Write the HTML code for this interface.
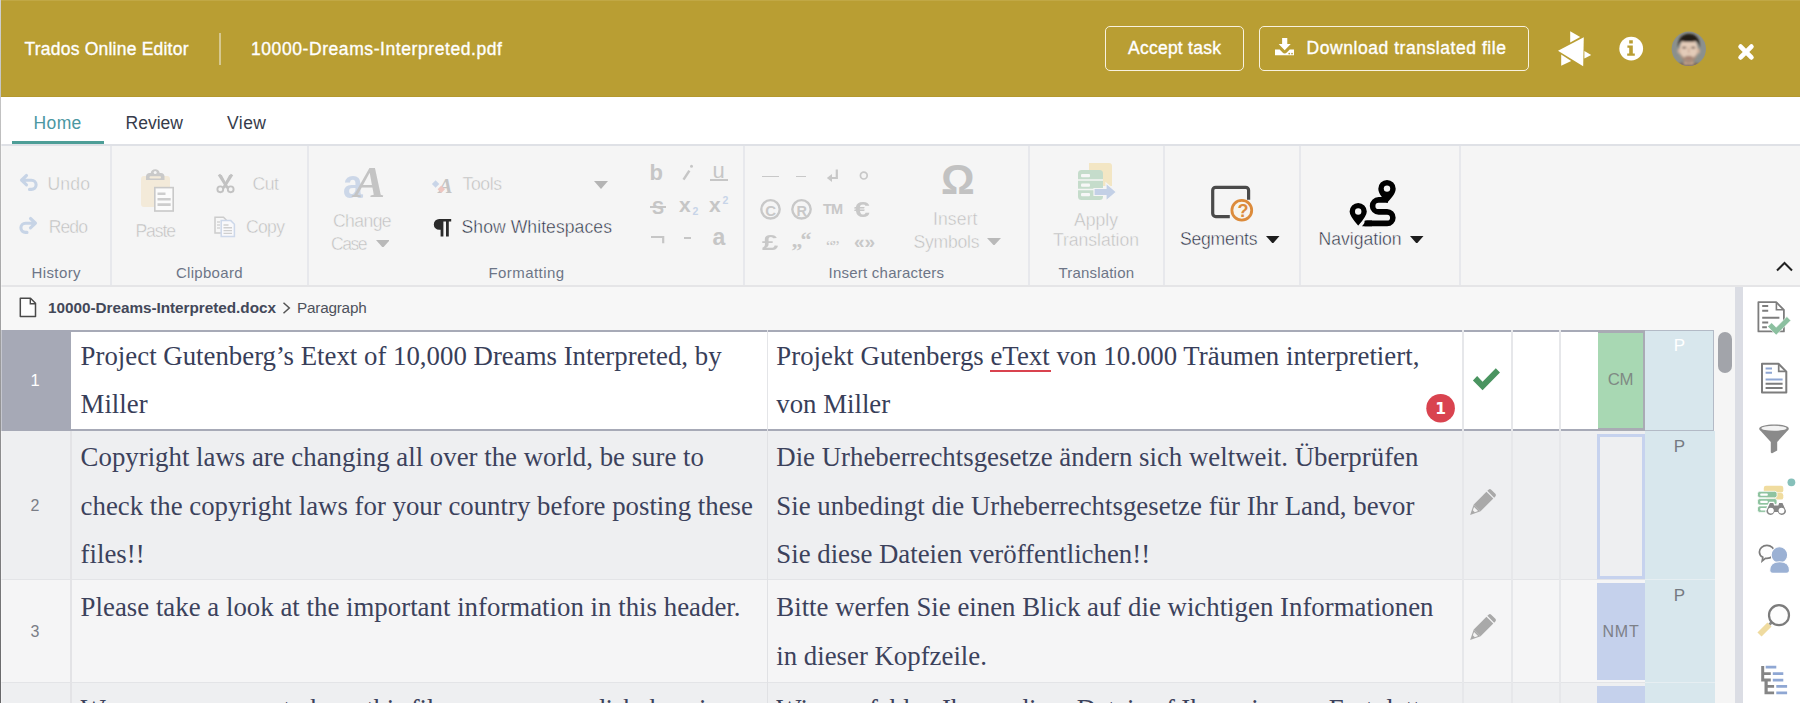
<!DOCTYPE html>
<html lang="en">
<head>
<meta charset="utf-8">
<title>Trados Online Editor</title>
<style>
*{box-sizing:border-box;margin:0;padding:0}
html,body{width:1800px;height:703px;overflow:hidden;background:#fff}
body{position:relative;font-family:"Liberation Sans",sans-serif;color:#3a3f4f}
.abs{position:absolute;display:block}
.t{position:absolute;white-space:nowrap;line-height:1;display:block}
.hbtn{position:absolute;top:26px;height:45px;border:1px solid #f8f2df;border-radius:5px}
.w{-webkit-text-stroke:.35px #fff}
.th{-webkit-text-stroke:.45px #f5f5f5}
</style>
</head>
<body>
<!-- HEADER -->
<div class="abs" style="left:0px;top:0px;width:1800px;height:97px;background:#b99e33;"></div>
<div class="abs" style="left:0px;top:0px;width:1800px;height:1px;background:#c1a845;"></div>
<div class="abs" style="left:0px;top:96px;width:1800px;height:1px;background:#b4982e;"></div>
<span class="t w" style="left:24.50px;top:41px;font-size:17.5px;color:#fff;letter-spacing:0.218px;">Trados Online Editor</span>
<div class="abs" style="left:219px;top:33px;width:2px;height:32px;background:#d6c88f;"></div>
<span class="t w" style="left:251.00px;top:41px;font-size:17.5px;color:#fff;letter-spacing:0.575px;">10000-Dreams-Interpreted.pdf</span>
<div class="hbtn" style="left:1105px;width:139px"></div>
<span class="t w" style="left:1128.00px;top:40px;font-size:17.5px;color:#fff;letter-spacing:0.244px;">Accept task</span>
<div class="hbtn" style="left:1259px;width:270px"></div>
<span class="t w" style="left:1306.50px;top:40px;font-size:17.5px;color:#fff;letter-spacing:0.552px;">Download translated file</span>
<svg class="abs" style="left:1274.6px;top:38.4px;" width="19.4" height="17.4" viewBox="0 0 18 16"><path fill="#fff" d="M6.6 0h4.8v5.6h3.2L9 11.2 3.4 5.6h3.2z"/><path fill="#fff" d="M0 10.6h4.3l2.5 2.5a3.1 3.1 0 0 0 4.4 0l2.5-2.5H18V16H0zM13.2 13.6a.8.8 0 1 0 0 1.6.8.8 0 0 0 0-1.6zm2.6 0a.8.8 0 1 0 0 1.6.8.8 0 0 0 0-1.6z" fill-rule="evenodd"/></svg>
<svg class="abs" style="left:1555px;top:28px;" width="40" height="42" viewBox="1555 28 40 42"><g fill="#fff"><path d="M1558 50.7 1583.8 37.3 1583.2 66.2z"/><path d="M1570.2 31.3 1580.2 37 1570.2 42.6z"/><path d="M1561.2 54.4 1571.2 61 1561.2 65.8z"/><path d="M1584.4 51 1591.2 55 1584.4 58.6z"/></g></svg>
<svg class="abs" style="left:1617px;top:35px;" width="28" height="28" viewBox="0 0 28 28"><circle cx="14.2" cy="13.6" r="11.9" fill="#fff"/><path fill="#b99e33" d="M12.2 5.2h3.6v3.4h-3.6zM10.4 10.6h5.4v8h2v2.2h-7.6v-2.2h2v-5.8h-1.8z"/></svg>
<svg class="abs" style="left:1671px;top:31px;" width="36" height="36" viewBox="0 0 36 36"><defs><clipPath id="av"><circle cx="17.800" cy="17.800" r="17.200"/></clipPath><filter id="bl" x="-20%" y="-20%" width="140%" height="140%"><feGaussianBlur stdDeviation=".900"/></filter></defs><g clip-path="url(#av)"><rect width="36" height="36" fill="#8b908d"/><g filter="url(#bl)"><path d="M3 37c1-3.500 5-5 8.500-5.500h12c3.500.500 7.500 2 8.500 5.500z" fill="#7d6b5d"/><path d="M13 27h9.500v6.500H13z" fill="#cfae97"/><ellipse cx="17.700" cy="19" rx="9.300" ry="12.400" fill="#e3cbb8"/><ellipse cx="8" cy="20" rx="1.500" ry="2.800" fill="#d2b29c"/><ellipse cx="27.400" cy="20" rx="1.500" ry="2.800" fill="#d2b29c"/><path d="M7.600 17.500C6 7.500 11.500 2.800 17.800 2.800c6.800 0 12 4.500 10.400 14.700-.500-3.500-1.500-6-3-7.600-4.500 1.200-10.500 1.200-14.800 0-1.500 1.800-2.300 4.200-2.800 7.600z" fill="#241c18"/><path d="M9 21.500c.800 6 4.200 10.800 8.700 10.800s7.900-4.800 8.700-10.800c-1.300 3-2.800 4.400-4.300 4.800-1.300-1.200-2.800-1.600-4.400-1.600s-3.100.400-4.400 1.600c-1.500-.400-3-1.800-4.300-4.800z" fill="#7a5c4c" opacity=".550"/><ellipse cx="13.200" cy="16.600" rx="2.300" ry=".900" fill="#4d3a30" opacity=".850"/><ellipse cx="22.200" cy="16.600" rx="2.300" ry=".900" fill="#4d3a30" opacity=".850"/><path d="M17.700 17v5" stroke="#c9a690" stroke-width="1.200"/><path d="M14.600 26.600c2 .900 4.200.900 6.200 0" stroke="#a8766a" stroke-width="1.100" fill="none"/></g></g></svg>
<svg class="abs" style="left:1736px;top:42px;" width="20" height="20" viewBox="0 0 20 20"><path d="M4.600 4.600 15.400 15.400M15.400 4.600 4.600 15.400" stroke="#fff" stroke-width="4.700" stroke-linecap="round"/></svg>
<!-- TABS -->
<span class="t" style="left:33.50px;top:115px;font-size:17.5px;color:#4b97a2;letter-spacing:0.392px;">Home</span>
<span class="t" style="left:125.50px;top:115px;font-size:17.5px;color:#363b4a;letter-spacing:0.020px;">Review</span>
<span class="t" style="left:227.00px;top:115px;font-size:17.5px;color:#363b4a;letter-spacing:0.458px;">View</span>
<div class="abs" style="left:12px;top:141px;width:92px;height:4px;background:#4d9e97;"></div>
<!-- RIBBON -->
<div class="abs" style="left:0px;top:145px;width:1800px;height:142px;background:#f5f5f5;"></div>
<div class="abs" style="left:0px;top:144px;width:1800px;height:2px;background:#dfe1e6;"></div>
<div class="abs" style="left:0px;top:285px;width:1800px;height:2px;background:#e5e5e7;"></div>
<div class="abs" style="left:110px;top:146px;width:2px;height:139px;background:#e7e8ec;"></div>
<div class="abs" style="left:307px;top:146px;width:2px;height:139px;background:#e7e8ec;"></div>
<div class="abs" style="left:743px;top:146px;width:2px;height:139px;background:#e7e8ec;"></div>
<div class="abs" style="left:1028px;top:146px;width:2px;height:139px;background:#e7e8ec;"></div>
<div class="abs" style="left:1163px;top:146px;width:2px;height:139px;background:#e7e8ec;"></div>
<div class="abs" style="left:1299px;top:146px;width:2px;height:139px;background:#e7e8ec;"></div>
<div class="abs" style="left:1459px;top:146px;width:2px;height:139px;background:#e7e8ec;"></div>
<span class="t th" style="left:47.50px;top:176px;font-size:17.6px;color:#bfbfbf;letter-spacing:0.145px;">Undo</span>
<span class="t th" style="left:48.70px;top:219px;font-size:17.6px;color:#bfbfbf;letter-spacing:-0.921px;">Redo</span>
<span class="t" style="left:31.50px;top:265px;font-size:15px;color:#6d7587;letter-spacing:0.392px;">History</span>
<svg class="abs" style="left:19px;top:173px;" width="20" height="20" viewBox="0 0 20 20"><path d="M7.500 2.500 2.500 7.200 7.500 11.900M3 7.200H12.500a4.600 4.600 0 0 1 0 9.200H10.500" fill="none" stroke="#c7d4e6" stroke-width="3.100" stroke-linecap="round" stroke-linejoin="round"/></svg>
<svg class="abs" style="left:18px;top:216px;" width="20" height="20" viewBox="0 0 20 20"><path d="M12.500 2.500 17.500 7.200 12.500 11.900M17 7.200H7.500a4.600 4.600 0 0 0 0 9.200H9" fill="none" stroke="#c7d4e6" stroke-width="3.100" stroke-linecap="round" stroke-linejoin="round"/></svg>
<span class="t th" style="left:135.50px;top:223px;font-size:17.6px;color:#bfbfbf;letter-spacing:-1.117px;">Paste</span>
<span class="t th" style="left:252.50px;top:176px;font-size:17.6px;color:#bfbfbf;letter-spacing:-0.434px;">Cut</span>
<span class="t th" style="left:246.00px;top:219px;font-size:17.6px;color:#bfbfbf;letter-spacing:-0.699px;">Copy</span>
<span class="t" style="left:176.00px;top:265px;font-size:15px;color:#6d7587;letter-spacing:0.287px;">Clipboard</span>
<svg class="abs" style="left:140px;top:168px;" width="36" height="46" viewBox="0 0 36 46"><rect x="1" y="8" width="29" height="31" rx="3" fill="#f3ead9"/><path d="M6 8.500c0-2 1.500-3.500 3.500-3.500h1.200a4.600 4.600 0 0 1 9 0H21c2 0 3.500 1.500 3.500 3.500V12H6z" fill="#c9c9c9"/><circle cx="15.200" cy="4.600" r="1.500" fill="#f5f5f5"/><rect x="9.500" y="8.200" width="11.500" height="2.300" rx="1" fill="#f3ead9"/><rect x="14.800" y="19.600" width="18.400" height="23.400" fill="#fbfbfb" stroke="#c9c9c9" stroke-width="1.600"/><path d="M17.500 25.800h8M17.500 31.200h13.200M17.500 36.600h13.200" stroke="#cdcdcd" stroke-width="2.600"/></svg>
<svg class="abs" style="left:215px;top:173px;" width="21" height="21" viewBox="0 0 21 21"><path d="M4 1.500 12.600 15M17 1.500 8.400 15" stroke="#c2c2c2" stroke-width="2.800" fill="none"/><path d="M4 1.500l2.800.500 5 9.500-2 .500zM17 1.500l-2.800.500-5 9.500 2 .500z" fill="#c2c2c2"/><circle cx="5.300" cy="16.300" r="2.900" fill="none" stroke="#c2c2c2" stroke-width="1.900"/><circle cx="15.700" cy="16.300" r="2.900" fill="none" stroke="#c2c2c2" stroke-width="1.900"/></svg>
<svg class="abs" style="left:213px;top:216px;" width="24" height="22" viewBox="0 0 24 22"><path d="M2 1.200h8.500l3 3V17H2z" fill="#f7f7f7" stroke="#cccccc" stroke-width="1.500"/><path d="M4 6h3M4 9h3M4 12h3" stroke="#d5d5d5" stroke-width="1.300"/><path d="M8.200 4.600h9.600l3.600 3.600V20.600H8.200z" fill="#f9f9fb" stroke="#cdd8ea" stroke-width="1.500"/><path d="M10.500 9h5M10.500 11.800h8.500M10.500 14.600h8.500M10.500 17.400h8.500" stroke="#cfcfcf" stroke-width="1.400"/></svg>
<span class="t th" style="left:333.00px;top:213px;font-size:17.6px;color:#bfbfbf;letter-spacing:-0.598px;">Change</span>
<span class="t th" style="left:331.00px;top:236px;font-size:17.6px;color:#bfbfbf;letter-spacing:-1.532px;">Case</span>
<svg class="abs" style="left:375.7px;top:239.7px;" width="13.800000000000011" height="7.800000000000011" viewBox="0 0 13.800000000000011 7.800000000000011"><path d="M0 0H13.800000000000011L6.900000000000006 7.800000000000011z" fill="#b9b9b9"/></svg>
<span class="t" style="left:342.60px;top:164px;font-size:40.5px;color:#ccd7e8;font-weight:700;transform:scaleX(.88);transform-origin:0 0;">a</span>
<span class="t" style="left:353.50px;top:161px;font-size:44px;color:#c4c4c4;font-family:'Liberation Serif',serif;font-weight:700;font-style:italic;transform:scaleX(1.06);transform-origin:0 0;">A</span>
<span class="t th" style="left:462.50px;top:176px;font-size:17.6px;color:#bfbfbf;letter-spacing:-0.399px;">Tools</span>
<svg class="abs" style="left:594px;top:181px;" width="14" height="8" viewBox="0 0 14 8"><path d="M0 0H14L7.0 8z" fill="#b4b4b4"/></svg>
<span class="t" style="left:438.50px;top:176px;font-size:21px;color:#c4c4c4;font-family:'Liberation Serif',serif;font-weight:700;font-style:italic;">A</span>
<svg class="abs" style="left:430px;top:178px;" width="20" height="18" viewBox="430 178 20 18"><path d="M435.600 180.300l3.700 3.700-3.700 3.700-3.700-3.700z" fill="#c9d5e8"/><path d="M441.300 185.600l3.700 3.700-3.700 3.700-3.700-3.700z" fill="#eec6c0"/></svg>
<svg class="abs" style="left:432px;top:218px;" width="20" height="19" viewBox="0 0 20 19"><path d="M7.200 1h12v2.600h-2.400V18.400h-2.800V3.600h-2.600V18.400H8.600V11.800H7.200a5.400 5.400 0 0 1 0-10.800z" fill="#2b2b2b"/></svg>
<span class="t th" style="left:461.50px;top:219px;font-size:17.6px;color:#262b3e;letter-spacing:0.054px;">Show Whitespaces</span>
<span class="t" style="left:488.50px;top:265px;font-size:15px;color:#6d7587;letter-spacing:0.422px;">Formatting</span>
<span class="t" style="left:649.50px;top:162px;font-size:22px;color:#c6c6c6;font-weight:700;">b</span>
<svg class="abs" style="left:680px;top:162px;" width="16" height="20" viewBox="680 162 16 20"><path d="M683.500 179.600 689.400 170.600" stroke="#c6c6c6" stroke-width="2.500"/><circle cx="691.500" cy="166.300" r="1.500" fill="#c6c6c6"/></svg>
<span class="t" style="left:712.50px;top:160px;font-size:22px;color:#c6c6c6;">u</span>
<div class="abs" style="left:710px;top:178.6px;width:17.5px;height:2px;background:#c6c6c6;"></div>
<span class="t" style="left:652.00px;top:199px;font-size:18px;color:#c6c6c6;font-weight:700;">S</span>
<div class="abs" style="left:649.5px;top:206px;width:16.5px;height:1.8px;background:#c6c6c6;"></div>
<span class="t" style="left:679.00px;top:194px;font-size:21px;color:#c6c6c6;font-weight:700;">x</span>
<span class="t" style="left:692.50px;top:206px;font-size:10.5px;color:#c7d4e8;font-weight:700;">2</span>
<span class="t" style="left:709.00px;top:194px;font-size:21px;color:#c6c6c6;font-weight:700;">x</span>
<span class="t" style="left:722.50px;top:195px;font-size:10.5px;color:#c7d4e8;font-weight:700;">2</span>
<svg class="abs" style="left:650px;top:235px;" width="16" height="10" viewBox="0 0 16 10"><path d="M1 2h12.200v6.200" stroke="#c6c6c6" stroke-width="2.200" fill="none"/></svg>
<div class="abs" style="left:684px;top:237px;width:7px;height:2.2px;background:#c6c6c6;"></div>
<span class="t" style="left:712.50px;top:226px;font-size:23px;color:#c6c6c6;font-weight:700;">a</span>
<!-- RIBBON 2 -->
<div class="abs" style="left:762px;top:175.5px;width:17px;height:1.4px;background:#c8c8c8;"></div>
<div class="abs" style="left:796px;top:175.5px;width:10px;height:1.4px;background:#c8c8c8;"></div>
<svg class="abs" style="left:826px;top:168px;" width="14" height="16" viewBox="0 0 14 16"><path d="M10.800 1.500V10H3" stroke="#c8c8c8" stroke-width="2.200" fill="none"/><path d="M.800 10 6 6v8z" fill="#c8c8c8"/></svg>
<svg class="abs" style="left:858px;top:170px;" width="12" height="12" viewBox="0 0 12 12"><circle cx="5.800" cy="5.600" r="3.400" fill="none" stroke="#c8c8c8" stroke-width="1.700"/></svg>
<svg class="abs" style="left:759px;top:198px;" width="23" height="23" viewBox="0 0 23 23"><circle cx="11.500" cy="11.300" r="9.200" fill="none" stroke="#c8c8c8" stroke-width="2.400"/></svg>
<span class="t" style="left:765.20px;top:203px;font-size:15px;color:#c8c8c8;font-weight:700;">C</span>
<svg class="abs" style="left:790px;top:198px;" width="23" height="23" viewBox="0 0 23 23"><circle cx="11.500" cy="11.300" r="9.200" fill="none" stroke="#c8c8c8" stroke-width="2.400"/></svg>
<span class="t" style="left:796.60px;top:204px;font-size:14.5px;color:#c8c8c8;font-weight:700;">R</span>
<span class="t" style="left:823.00px;top:202px;font-size:14.5px;color:#c8c8c8;font-weight:700;letter-spacing:-0.953px;">TM</span>
<span class="t" style="left:854.00px;top:199px;font-size:22px;color:#c8c8c8;font-weight:700;transform:scaleX(1.3);transform-origin:0 0;">€</span>
<span class="t" style="left:762.00px;top:233px;font-size:21.5px;color:#c8c8c8;font-weight:700;transform:scaleX(1.36);transform-origin:0 0;">£</span>
<span class="t" style="left:791.50px;top:229px;font-size:22px;color:#c8c8c8;font-family:'Liberation Serif',serif;font-weight:700;letter-spacing:-2.000px;">„“</span>
<span class="t" style="left:826.00px;top:238px;font-size:17px;color:#c8c8c8;font-family:'Liberation Serif',serif;letter-spacing:-1.630px;">“”</span>
<span class="t" style="left:854.00px;top:232px;font-size:19px;color:#c8c8c8;font-weight:700;">«»</span>
<span class="t" style="left:941.00px;top:159px;font-size:42px;color:#c2c2c2;font-weight:700;">Ω</span>
<span class="t th" style="left:933.00px;top:211px;font-size:17.6px;color:#bfbfbf;letter-spacing:0.100px;">Insert</span>
<span class="t th" style="left:913.50px;top:234px;font-size:17.6px;color:#bfbfbf;letter-spacing:-0.249px;">Symbols</span>
<svg class="abs" style="left:987px;top:237.7px;" width="14" height="7.600000000000023" viewBox="0 0 14 7.600000000000023"><path d="M0 0H14L7.0 7.600000000000023z" fill="#b9b9b9"/></svg>
<span class="t" style="left:828.50px;top:265px;font-size:15px;color:#6d7587;letter-spacing:0.239px;">Insert characters</span>
<span class="t th" style="left:1074.00px;top:212px;font-size:17.6px;color:#bfbfbf;">Apply</span>
<span class="t th" style="left:1053.00px;top:232px;font-size:17.6px;color:#bfbfbf;letter-spacing:-0.042px;">Translation</span>
<span class="t" style="left:1058.50px;top:265px;font-size:15px;color:#6d7587;letter-spacing:0.185px;">Translation</span>
<svg class="abs" style="left:1076px;top:161px;" width="42" height="41" viewBox="0 0 42 41"><path d="M13 2h20a3 3 0 0 1 3 3v20H13z" fill="#f3e6c4"/><rect x="2" y="9" width="25" height="30" rx="3.500" fill="#c5dccb"/><rect x="5" y="13" width="9" height="3.200" rx="1" fill="#f7f7f7"/><rect x="5" y="22.500" width="9" height="3.200" rx="1" fill="#f7f7f7"/><rect x="5" y="32" width="9" height="3.200" rx="1" fill="#f7f7f7"/><path d="M2 19h25M2 28.500h25" stroke="#f5f5f5" stroke-width="1.400"/><path d="M18 27.500h12v-5.500l10.500 9L30 40V34.500H18z" fill="#c3d0e6" stroke="#f5f5f5" stroke-width="1.200"/></svg>
<span class="t th" style="left:1180.00px;top:231px;font-size:17.6px;color:#262b3e;letter-spacing:-0.241px;">Segments</span>
<svg class="abs" style="left:1266px;top:235.5px;" width="13.5" height="7.699999999999989" viewBox="0 0 13.5 7.699999999999989"><path d="M0 0H13.5L6.75 7.699999999999989z" fill="#1d1d1d"/></svg>
<svg class="abs" style="left:1205px;top:180px;" width="52" height="46" viewBox="1205 180 52 46"><path d="M1248.6 199.8V190.3a3 3 0 0 0-3-3H1215.700a3 3 0 0 0-3 3v23.300a3 3 0 0 0 3 3H1229.800" fill="none" stroke="#4a4a4a" stroke-width="3.200"/><circle cx="1241.800" cy="210.200" r="9.900" fill="#f7f4ee" stroke="#dc8b3b" stroke-width="2.800"/></svg>
<span class="t" style="left:1237.60px;top:202px;font-size:18px;color:#dc8b3b;font-weight:700;">?</span>
<span class="t th" style="left:1318.50px;top:231px;font-size:17.6px;color:#262b3e;">Navigation</span>
<svg class="abs" style="left:1410px;top:235.5px;" width="13.5" height="7.699999999999989" viewBox="0 0 13.5 7.699999999999989"><path d="M0 0H13.5L6.75 7.699999999999989z" fill="#1d1d1d"/></svg>
<svg class="abs" style="left:1345px;top:176px;" width="56" height="54" viewBox="1345 176 56 54"><path d="M1388 199.900H1378.600A6 6 0 0 0 1378.600 211.900H1387.100A5.750 5.750 0 0 1 1387.100 223.400H1364.500" fill="none" stroke="#000" stroke-width="5.600"/><path d="M1362 226.200 1366.500 220.600H1372V226.200z" fill="#000"/><path d="M1387 202.89999999999998C1384 199.39999999999998 1378.3 194.2 1378.3 188.7A8.7 8.7 0 1 1 1395.7 188.7C1395.7 194.2 1390 199.39999999999998 1387 202.89999999999998z" fill="#000"/><circle cx="1387" cy="188.600" r="3.200" fill="#f5f5f5"/><path d="M1358.2 227.0C1355.2 223.5 1348.7 217.1 1348.7 211.6A9.5 9.5 0 1 1 1367.7 211.6C1367.7 217.1 1361.2 223.5 1358.2 227.0z" fill="#000" stroke="#f5f5f5" stroke-width="1.800"/><circle cx="1358.200" cy="211.500" r="3.200" fill="#f5f5f5"/></svg>
<svg class="abs" style="left:1775px;top:260px;" width="19" height="13" viewBox="0 0 19 13"><path d="M2 10.500 9.500 3 17 10.500" fill="none" stroke="#222" stroke-width="2"/></svg>
<!-- GRID -->
<div class="abs" style="left:0px;top:287px;width:1735px;height:43px;background:#f7f7f7;"></div>
<svg class="abs" style="left:18px;top:296px;" width="20" height="23" viewBox="0 0 20 23"><path d="M2.300 2.300h10.200l5 5V20.600H2.300z" fill="#fdfdfd" stroke="#4a4a4a" stroke-width="1.500" stroke-linejoin="round"/><path d="M12.300 2.500v5.200h5.200" fill="none" stroke="#4a4a4a" stroke-width="1.400"/></svg>
<span class="t" style="left:48.00px;top:300px;font-size:15.3px;color:#434859;font-weight:700;letter-spacing:-0.026px;">10000-Dreams-Interpreted.docx</span>
<svg class="abs" style="left:281px;top:301px;" width="11" height="14" viewBox="0 0 11 14"><path d="M2.500 1.800 8.300 7 2.500 12.200" fill="none" stroke="#555" stroke-width="1.500"/></svg>
<span class="t" style="left:297.00px;top:300px;font-size:15.3px;color:#4e525c;letter-spacing:-0.219px;">Paragraph</span>
<div class="abs" style="left:0px;top:330px;width:1714px;height:101px;background:#fff;"></div>
<div class="abs" style="left:0px;top:431px;width:1714px;height:149px;background:#eeeff1;"></div>
<div class="abs" style="left:0px;top:580px;width:1714px;height:103px;background:#f5f5f6;"></div>
<div class="abs" style="left:0px;top:683px;width:1714px;height:20px;background:#eeeff1;"></div>
<div class="abs" style="left:1714px;top:330px;width:21px;height:373px;background:#f5f5f5;"></div>
<div class="abs" style="left:0px;top:330px;width:71px;height:101px;background:#a6a9b6;"></div>
<div class="abs" style="left:0px;top:579px;width:1714px;height:1px;background:#e3e4e7;"></div>
<div class="abs" style="left:0px;top:682px;width:1714px;height:1px;background:#e3e4e7;"></div>
<div class="abs" style="left:70px;top:431px;width:2px;height:272px;background:#e3e3e6;"></div>
<div class="abs" style="left:767px;top:431px;width:1px;height:272px;background:#e0e1e4;"></div>
<div class="abs" style="left:767px;top:332px;width:1px;height:97px;background:#e4e5e8;"></div>
<div class="abs" style="left:1645px;top:330px;width:69px;height:101px;background:#d8e7ed;"></div>
<div class="abs" style="left:1645px;top:431px;width:70px;height:272px;background:#d8e7ed;"></div>
<div class="abs" style="left:1645px;top:579px;width:70px;height:1px;background:#e6eef2;"></div>
<div class="abs" style="left:1645px;top:682px;width:70px;height:1px;background:#e6eef2;"></div>
<div class="abs" style="left:1598px;top:333px;width:46px;height:95px;background:#a8d8b3;"></div>
<div class="abs" style="left:1643px;top:332px;width:2px;height:97px;background:#a9abb4;"></div>
<div class="abs" style="left:71px;top:330px;width:1574px;height:2px;background:#a7aab7;"></div>
<div class="abs" style="left:71px;top:429px;width:1574px;height:2px;background:#a7aab7;"></div>
<div class="abs" style="left:1598px;top:330px;width:47px;height:3px;background:#a9abb4;"></div>
<div class="abs" style="left:1598px;top:428px;width:47px;height:3px;background:#a9abb4;"></div>
<div class="abs" style="left:1645px;top:330px;width:69px;height:101px;background:transparent;border:1px solid #b3bac6;border-left:none;"></div>
<div class="abs" style="left:1462px;top:330px;width:2px;height:373px;background:#e6e7ea;"></div>
<div class="abs" style="left:1511px;top:330px;width:2px;height:373px;background:#e6e7ea;"></div>
<div class="abs" style="left:1559px;top:330px;width:2px;height:373px;background:#e6e7ea;"></div>
<div class="abs" style="left:767px;top:330px;width:1px;height:2px;background:#dcdde3;"></div>
<div class="abs" style="left:767px;top:429px;width:1px;height:2px;background:#dcdde3;"></div>
<div class="abs" style="left:1596.5px;top:433.5px;width:48.3px;height:145px;background:transparent;border:3px solid #c6d2ee;"></div>
<div class="abs" style="left:1596.5px;top:583px;width:48.5px;height:97px;background:#c5d1ec;"></div>
<div class="abs" style="left:1596.5px;top:686px;width:48.5px;height:17px;background:#c5d1ec;"></div>
<span class="t" style="left:1607.80px;top:372px;font-size:16.8px;color:#7f8a84;letter-spacing:-0.324px;">CM</span>
<span class="t" style="left:1602.40px;top:624px;font-size:16px;color:#7d8088;letter-spacing:0.880px;">NMT</span>
<span class="t" style="left:1673.80px;top:337px;font-size:17px;color:#fff;">P</span>
<span class="t" style="left:1673.80px;top:438px;font-size:17px;color:#757a82;">P</span>
<span class="t" style="left:1673.80px;top:587px;font-size:17px;color:#757a82;">P</span>
<span class="t" style="left:30.60px;top:372px;font-size:16.5px;color:#fff;">1</span>
<span class="t" style="left:30.50px;top:498px;font-size:16px;color:#7a7d86;">2</span>
<span class="t" style="left:30.50px;top:624px;font-size:16px;color:#7a7d86;">3</span>
<span class="t" style="left:80.60px;top:343px;font-size:26.8px;color:#383e59;font-family:'Liberation Serif',serif;letter-spacing:0.013px;">Project Gutenberg’s Etext of 10,000 Dreams Interpreted, by</span>
<span class="t" style="left:80.60px;top:391px;font-size:26.8px;color:#383e59;font-family:'Liberation Serif',serif;">Miller</span>
<span class="t" style="left:776.30px;top:343px;font-size:26.8px;color:#383e59;font-family:'Liberation Serif',serif;letter-spacing:0.016px;">Projekt Gutenbergs eText von 10.000 Träumen interpretiert,</span>
<span class="t" style="left:776.30px;top:391px;font-size:26.8px;color:#383e59;font-family:'Liberation Serif',serif;">von Miller</span>
<div class="abs" style="left:990px;top:370px;width:61px;height:1.8px;background:#d9434f;"></div>
<span class="t" style="left:80.60px;top:444px;font-size:26.8px;color:#3c425c;font-family:'Liberation Serif',serif;letter-spacing:0.008px;">Copyright laws are changing all over the world, be sure to</span>
<span class="t" style="left:80.60px;top:493px;font-size:26.8px;color:#3c425c;font-family:'Liberation Serif',serif;letter-spacing:0.006px;">check the copyright laws for your country before posting these</span>
<span class="t" style="left:80.60px;top:541px;font-size:26.8px;color:#3c425c;font-family:'Liberation Serif',serif;">files!!</span>
<span class="t" style="left:776.30px;top:444px;font-size:26.8px;color:#3c425c;font-family:'Liberation Serif',serif;letter-spacing:0.013px;">Die Urheberrechtsgesetze ändern sich weltweit. Überprüfen</span>
<span class="t" style="left:776.30px;top:493px;font-size:26.8px;color:#3c425c;font-family:'Liberation Serif',serif;letter-spacing:0.020px;">Sie unbedingt die Urheberrechtsgesetze für Ihr Land, bevor</span>
<span class="t" style="left:776.30px;top:541px;font-size:26.8px;color:#3c425c;font-family:'Liberation Serif',serif;">Sie diese Dateien veröffentlichen!!</span>
<span class="t" style="left:80.60px;top:594px;font-size:26.8px;color:#3c425c;font-family:'Liberation Serif',serif;letter-spacing:0.021px;">Please take a look at the important information in this header.</span>
<span class="t" style="left:776.30px;top:594px;font-size:26.8px;color:#3c425c;font-family:'Liberation Serif',serif;letter-spacing:0.015px;">Bitte werfen Sie einen Blick auf die wichtigen Informationen</span>
<span class="t" style="left:776.30px;top:643px;font-size:26.8px;color:#3c425c;font-family:'Liberation Serif',serif;">in dieser Kopfzeile.</span>
<span class="t" style="left:80.60px;top:696px;font-size:26.8px;color:#3c425c;font-family:'Liberation Serif',serif;letter-spacing:-0.182px;">We encourage you to keep this file on your own disk, keeping</span>
<span class="t" style="left:776.30px;top:696px;font-size:26.8px;color:#3c425c;font-family:'Liberation Serif',serif;letter-spacing:-0.104px;">Wir empfehlen Ihnen, diese Datei auf Ihrer eigenen Festplatte</span>
<svg class="abs" style="left:1470px;top:365.3px;" width="32.5" height="28.3" viewBox="0 0 31 27"><path d="M2.800 14.800 6.800 10.600 12 16 24.600 3 28.600 7.200 12 24.200z" fill="#4a9460"/></svg>
<svg class="abs" style="left:1466.2px;top:486.8px;" width="32" height="32" viewBox="1466.2 486.8 32 32"><g transform="translate(1482.2 502.8) rotate(45) scale(1.05)"><path d="M-4.600 -11.800V-13.400a1.800 1.800 0 0 1 1.800-1.800h5.600a1.800 1.800 0 0 1 1.800 1.800v1.600z" fill="#a9a9a9"/><path d="M-4.600 -10.600h9.200V6.500h-9.200z" fill="#a9a9a9"/><path d="M-4.600 6.500h9.200L0 16z" fill="#a9a9a9"/><path d="M-2.700 8h5.400L1.300 11h-2.600z" fill="#f3f3f3"/></g></svg>
<svg class="abs" style="left:1466.2px;top:612.4px;" width="32" height="32" viewBox="1466.2 612.4 32 32"><g transform="translate(1482.2 628.4) rotate(45) scale(1.05)"><path d="M-4.600 -11.800V-13.400a1.800 1.800 0 0 1 1.800-1.800h5.600a1.800 1.800 0 0 1 1.800 1.800v1.600z" fill="#a9a9a9"/><path d="M-4.600 -10.600h9.200V6.500h-9.200z" fill="#a9a9a9"/><path d="M-4.600 6.500h9.200L0 16z" fill="#a9a9a9"/><path d="M-2.700 8h5.400L1.300 11h-2.600z" fill="#f3f3f3"/></g></svg>
<svg class="abs" style="left:1425px;top:393px;" width="31" height="31" viewBox="0 0 31 31"><circle cx="15.600" cy="15.200" r="14.300" fill="#d9434f"/></svg>
<span class="t" style="left:1435.3px;top:401.5px;font-size:15.5px;font-weight:700;color:#fff;font-family:'DejaVu Sans',sans-serif">1</span>
<div class="abs" style="left:1718px;top:332px;width:14px;height:41px;background:#a2a4aa;border-radius:7px;"></div>
<!-- SIDEBAR -->
<div class="abs" style="left:1735px;top:287px;width:8px;height:416px;background:#dbdde4;"></div>
<div class="abs" style="left:1743px;top:287px;width:57px;height:416px;background:#fff;"></div>
<svg class="abs" style="left:1750px;top:295px;" width="50" height="45" viewBox="1750 295 50 45"><path d="M1758.400 302.100h17.800l7.700 7.700V331.400H1758.400z" fill="#fff" stroke="#7d7d7d" stroke-width="1.800" stroke-linejoin="round"/><path d="M1776.400 302.300v7.400h7.400" fill="none" stroke="#7d7d7d" stroke-width="1.600"/><path d="M1762.200 306.100h6M1762.200 310.800h6M1762.200 317.800h17.200M1762.200 322.500h6M1762.200 327.200h4.700" stroke="#7d7d7d" stroke-width="2"/><path d="M1767.700 326.600l3.900-3.900 4.600 4.600 10.700-10.700 3.900 3.900-14.600 14.600z" fill="#8cc0a0" stroke="#fff" stroke-width=".600"/></svg>
<svg class="abs" style="left:1755px;top:358px;" width="40" height="42" viewBox="1755 358 40 42"><path d="M1762 363.800h16.500l7.800 7.800V392.400H1762z" fill="#fff" stroke="#7d7d7d" stroke-width="2" stroke-linejoin="round"/><path d="M1778.700 364v7.400h7.400" fill="none" stroke="#7d7d7d" stroke-width="1.700"/><path d="M1765.600 368.400h6.400M1765.600 372.800h6.400M1765.600 379.400h17" stroke="#8fa7d3" stroke-width="2"/><path d="M1765.600 383.800h17M1765.600 388h17" stroke="#7d7d7d" stroke-width="2"/></svg>
<svg class="abs" style="left:1755px;top:420px;" width="40" height="38" viewBox="1755 420 40 38"><path d="M1759.200 428.600C1759.200 426 1766 424.400 1774 424.400s14.800 1.600 14.800 4.200c0 1-.600 1.900-1.800 2.600L1777.200 442v8.600l-4.600 2.400c-1 .500-1.800 0-1.800-1V442l-9.800-10.800c-1.200-.700-1.800-1.600-1.800-2.600z" fill="#8a8a8a"/><ellipse cx="1774" cy="428.300" rx="12.600" ry="2.500" fill="#f2f2f2"/></svg>
<svg class="abs" style="left:1786px;top:477px;" width="11" height="11" viewBox="0 0 11 11"><circle cx="5.400" cy="5.300" r="3.900" fill="#86c0ba"/></svg>
<svg class="abs" style="left:1752px;top:482px;" width="40" height="38" viewBox="1752 482 40 38"><rect x="1763.800" y="485.800" width="19.500" height="6.600" rx="2.200" fill="#f0dc9f"/><rect x="1766" y="493" width="17.300" height="6.600" rx="2.200" fill="#f0dc9f"/><rect x="1757.500" y="491.300" width="19.500" height="6.500" rx="2.200" fill="#8fc3a0" stroke="#fff" stroke-width=".800"/><rect x="1757.500" y="498.600" width="19.500" height="6.500" rx="2.200" fill="#8fc3a0" stroke="#fff" stroke-width=".800"/><rect x="1757.500" y="505.900" width="19.500" height="6.500" rx="2.200" fill="#8fc3a0" stroke="#fff" stroke-width=".800"/><rect x="1760.200" y="493.400" width="7.600" height="2.400" rx=".800" fill="#fff"/><rect x="1760.200" y="500.700" width="7.600" height="2.400" rx=".800" fill="#fff"/><rect x="1760.200" y="508" width="6" height="2.400" rx=".800" fill="#fff"/><path d="M1769.500 502.400h4.200l.800 2.400h3.400l.800-2.400h4.200l3.700 8.300a4.700 4.700 0 0 1-9 2h-2.800a4.700 4.700 0 0 1-9-2z" fill="#858585" stroke="#fff" stroke-width="1.200"/><circle cx="1770.900" cy="510.600" r="2.900" fill="#fff"/><circle cx="1781.500" cy="510.600" r="2.900" fill="#fff"/></svg>
<svg class="abs" style="left:1755px;top:540px;" width="40" height="38" viewBox="1755 540 40 38"><path d="M1766.900 545.400c4.200 0 7.500 2.900 7.500 6.500s-3.300 6.500-7.500 6.500c-.500 0-1 0-1.500-.100l-3.200 2.600 .600-3.600c-2-1.200-3.400-3.200-3.400-5.400 0-3.600 3.300-6.500 7.500-6.500z" fill="#fdfdfd" stroke="#7c7c7c" stroke-width="1.700"/><circle cx="1779.400" cy="555.100" r="8.300" fill="#9bb1d4" stroke="#fff" stroke-width="1.100"/><path d="M1769.700 570.500c0-5.500 4-8.700 9.900-8.700s9.900 3.200 9.900 8.700c0 1.800-1.200 2.900-3 2.900H1772.700c-1.800 0-3-1.100-3-2.900z" fill="#9bb1d4" stroke="#fff" stroke-width="1.100"/></svg>
<svg class="abs" style="left:1756px;top:601px;" width="37" height="37" viewBox="0 0 37 37"><path d="M3.500 33.500 13.500 23.500" stroke="#efdba0" stroke-width="5.800" stroke-linecap="butt"/><path d="M13.500 23.500 16 21" stroke="#8a8a8a" stroke-width="2.600"/><circle cx="23" cy="14.200" r="10" fill="#fdfdfd" stroke="#7c7c7c" stroke-width="2.200"/></svg>
<svg class="abs" style="left:1758px;top:662px;" width="32" height="36" viewBox="1758 662 32 36"><path d="M1761.200 666h3v15.600h-3zM1761.200 672.300h9.600v2.700h-9.600zM1761.200 678.600h9.600v3h-9.600zM1764.500 681.600h3.200v12.600h-3.200zM1764.500 684.900h9.600v2.800h-9.600zM1764.500 691.400h9.600v2.800h-9.600z" fill="#858585"/><path d="M1765.700 665.800h10.600v2.700h-10.600zM1772.800 672.300h10.500v2.700h-10.500zM1772.800 678.700h10.500v2.800h-10.500zM1776.300 685h10.800v2.700h-10.800zM1776.300 691.400h10.800v2.800h-10.800z" fill="#8fa7d3"/></svg>
<div class="abs" style="left:1px;top:97px;width:1px;height:606px;background:rgba(255,255,255,.35)"></div>
<div class="abs" style="left:0;top:0;width:1px;height:703px;background:linear-gradient(to bottom,#d0d0d0 0,#c4c4c4 14%,#666668 100%)"></div>
</body>
</html>
